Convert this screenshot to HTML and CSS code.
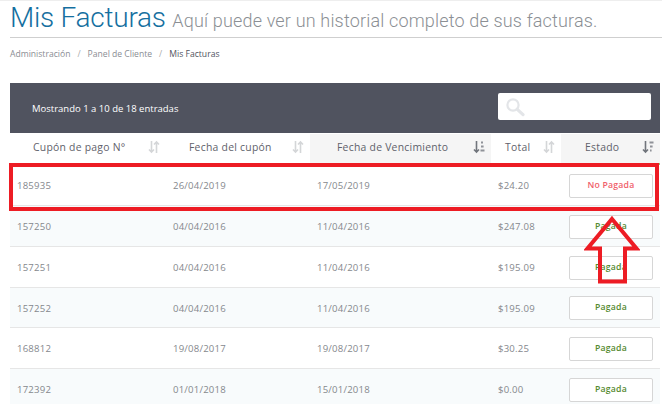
FILE: index.html
```html
<!DOCTYPE html>
<html lang="es">
<head>
<meta charset="utf-8">
<title>Mis Facturas</title>
<link rel="stylesheet" href="styles.css">
</head>
<body>
<header class="page-head">
  <h1 class="title">Mis Facturas <small class="subtitle">Aquí puede ver un historial completo de sus facturas.</small></h1>
</header>
<nav class="crumbs">
  <a>Administración</a><span class="sep">/</span><a>Panel de Cliente</a><span class="sep">/</span><span class="current">Mis Facturas</span>
</nav>
<main class="panel">
  <div class="toolbar">
    <span class="info">Mostrando 1 a 10 de 18 entradas</span>
    <label class="search">
      <svg class="search-icon" viewBox="0 0 20 20" width="20" height="20"><circle cx="8" cy="8" r="5.6" fill="none" stroke="#e3e5e8" stroke-width="2.2"/><path d="M12.3 12.3 18 17.6" stroke="#e3e5e8" stroke-width="3.2" stroke-linecap="round"/></svg>
    </label>
  </div>
  <table class="invoices">
    <colgroup><col class="c1"><col class="c2"><col class="c3"><col class="c4"><col class="c5"></colgroup>
    <thead>
      <tr>
        <th><div class="th-in"><span class="lbl l1">Cupón de pago N°</span><svg class="sort" viewBox="0 0 12 14" width="12" height="14"><path d="M3.500 1v11M1 9.500 3.500 12 6 9.500" fill="none" stroke="#d4d6d8" stroke-width="1.6"/><path d="M8.500 13V2M6 4.500 8.500 2 11 4.500" fill="none" stroke="#d4d6d8" stroke-width="1.6"/></svg></div></th>
        <th><div class="th-in"><span class="lbl l2">Fecha del cupón</span><svg class="sort" viewBox="0 0 12 14" width="12" height="14"><path d="M3.500 1v11M1 9.500 3.500 12 6 9.500" fill="none" stroke="#d4d6d8" stroke-width="1.6"/><path d="M8.500 13V2M6 4.500 8.500 2 11 4.500" fill="none" stroke="#d4d6d8" stroke-width="1.6"/></svg></div></th>
        <th class="sorted"><div class="th-in"><span class="lbl l3">Fecha de Vencimiento</span><svg class="sort" viewBox="0 0 12 14" width="12" height="14"><path d="M3.500 1v11M1 9.500 3.500 12 6 9.500" fill="none" stroke="#71757c" stroke-width="1.6"/><path d="M8 2.500h2M8 6.500h2.600M7.500 10.500h4" fill="none" stroke="#8f9298" stroke-width="1.8"/></svg></div></th>
        <th><div class="th-in"><span class="lbl l4">Total</span><svg class="sort" viewBox="0 0 12 14" width="12" height="14"><path d="M3.500 1v11M1 9.500 3.500 12 6 9.500" fill="none" stroke="#d4d6d8" stroke-width="1.6"/><path d="M8.500 13V2M6 4.500 8.500 2 11 4.500" fill="none" stroke="#d4d6d8" stroke-width="1.6"/></svg></div></th>
        <th class="sorted"><div class="th-in"><span class="lbl l5">Estado</span><svg class="sort" viewBox="0 0 12 14" width="12" height="14"><path d="M3.500 1v11M1 9.500 3.500 12 6 9.500" fill="none" stroke="#71757c" stroke-width="1.6"/><path d="M7.500 2.500h4M8 6.500h2.600M8 10.500h1.600" fill="none" stroke="#8f9298" stroke-width="1.8"/></svg></div></th>
      </tr>
    </thead>
    <tbody>
      <tr><td>185935</td><td>26/04/2019</td><td>17/05/2019</td><td>$24.20</td><td><span class="status unpaid">No Pagada</span></td></tr>
      <tr><td>157250</td><td>04/04/2016</td><td>11/04/2016</td><td>$247.08</td><td><span class="status paid">Pagada</span></td></tr>
      <tr><td>157251</td><td>04/04/2016</td><td>11/04/2016</td><td>$195.09</td><td><span class="status paid">Pagada</span></td></tr>
      <tr class="short"><td>157252</td><td>04/04/2016</td><td>11/04/2016</td><td>$195.09</td><td><span class="status paid">Pagada</span></td></tr>
      <tr><td>168812</td><td>19/08/2017</td><td>19/08/2017</td><td>$30.25</td><td><span class="status paid">Pagada</span></td></tr>
      <tr><td>172392</td><td>01/01/2018</td><td>15/01/2018</td><td>$0.00</td><td><span class="status paid">Pagada</span></td></tr>
    </tbody>
  </table>
</main>
<div class="highlight"></div>
<svg class="arrow" viewBox="0 0 56 72" width="56" height="72"><path d="M28 4 52.500 33.500H41V66.500H16V33.500H3.500Z" fill="none" stroke="#ed1c24" stroke-width="4"/></svg>
</body>
</html>
```
FILE: styles.css
```css
* { box-sizing: border-box; }
html, body { margin: 0; padding: 0; }
body {
  width: 662px;
  height: 404px;
  overflow: hidden;
  position: relative;
  background: #fff;
  font-family: "Open Sans", sans-serif;
  border-top: 1px solid #eeeeee;
  color: #76797f;
}
.page-head {
  margin-left: 10px;
  height: 36px;
  border-bottom: 1px solid #cfcfcf;
  box-sizing: content-box;
}
.title {
  margin: 0;
  font-family: Roboto, sans-serif;
  font-weight: 300;
  font-size: 28px;
  line-height: 34px;
  color: #156f9f;
  letter-spacing: -0.25px;
  white-space: nowrap;
}
.subtitle {
  font-size: 18px;
  color: #8b8f94;
  letter-spacing: 0.17px;
  margin-left: 0;
}
.crumbs {
  margin: 10px 0 0 10px;
  height: 12px;
  display: flex;
  align-items: center;
  font-size: 8.6px;
  color: #8a8d93;
}
.sep { margin: 0 7px; color: #aaa; }
.current { color: #50545e; }
.panel { margin: 23px 2px 0 10px; }
.toolbar {
  height: 50px;
  background: #50535f;
  display: flex;
  align-items: center;
  justify-content: space-between;
  padding: 0 9px 0 22px;
}
.info { font-size: 9.5px; color: #fff; }
.search {
  width: 153px;
  height: 27px;
  margin-top: -3px;
  background: #fff;
  border-radius: 2px;
  display: flex;
  align-items: center;
  padding-left: 7px;
}
.invoices {
  width: 650px;
  margin-top: 1px;
  table-layout: fixed;
  border-collapse: collapse;
}
.c1 { width: 156px; }
.c2 { width: 144px; }
.c3 { width: 181px; }
.c4 { width: 70px; }
.c5 { width: 99px; }
th {
  height: 30px;
  padding: 0;
  font-weight: 400;
  font-size: 10.4px;
  color: #5f626b;
  letter-spacing: 0.25px;
  border-bottom: 2px solid #95c974;
  background: #fff;
}
th.sorted { background: #f5f5f5; }
.th-in {
  display: flex;
  align-items: center;
  justify-content: space-between;
  padding: 0 6px 3px 0;
}
.lbl { display: block; }
.l1 { margin-left: 23px; }
.l2 { margin-left: 23px; }
.l3 { margin-left: 27px; }
.l4 { margin-left: 14px; }
.l5 { margin-left: 24px; }
td {
  height: 41px;
  padding: 2px 0 0 7px;
  font-size: 9.6px;
  color: #85888d;
  border-bottom: 1px solid #e6e6e6;
  letter-spacing: 0.2px;
}
.short td { height: 40px; }
tbody tr:nth-child(even) td { background: #f8fbfc; }
td:last-child { padding-left: 8px; }
.status {
  display: block;
  width: 84px;
  height: 24px;
  line-height: 21px;
  text-align: center;
  font-size: 8.7px;
  font-weight: 550;
  background: #fff;
  border: 1.5px solid #d6d6d6;
  border-radius: 2px;
}
.unpaid { color: #f0606a; }
.paid { color: #558a30; }
.highlight {
  position: absolute;
  left: 9px;
  top: 162px;
  width: 650px;
  height: 48px;
  border: 4px solid #ed1c24;
}
.arrow {
  position: absolute;
  left: 584px;
  top: 214px;
}
```
